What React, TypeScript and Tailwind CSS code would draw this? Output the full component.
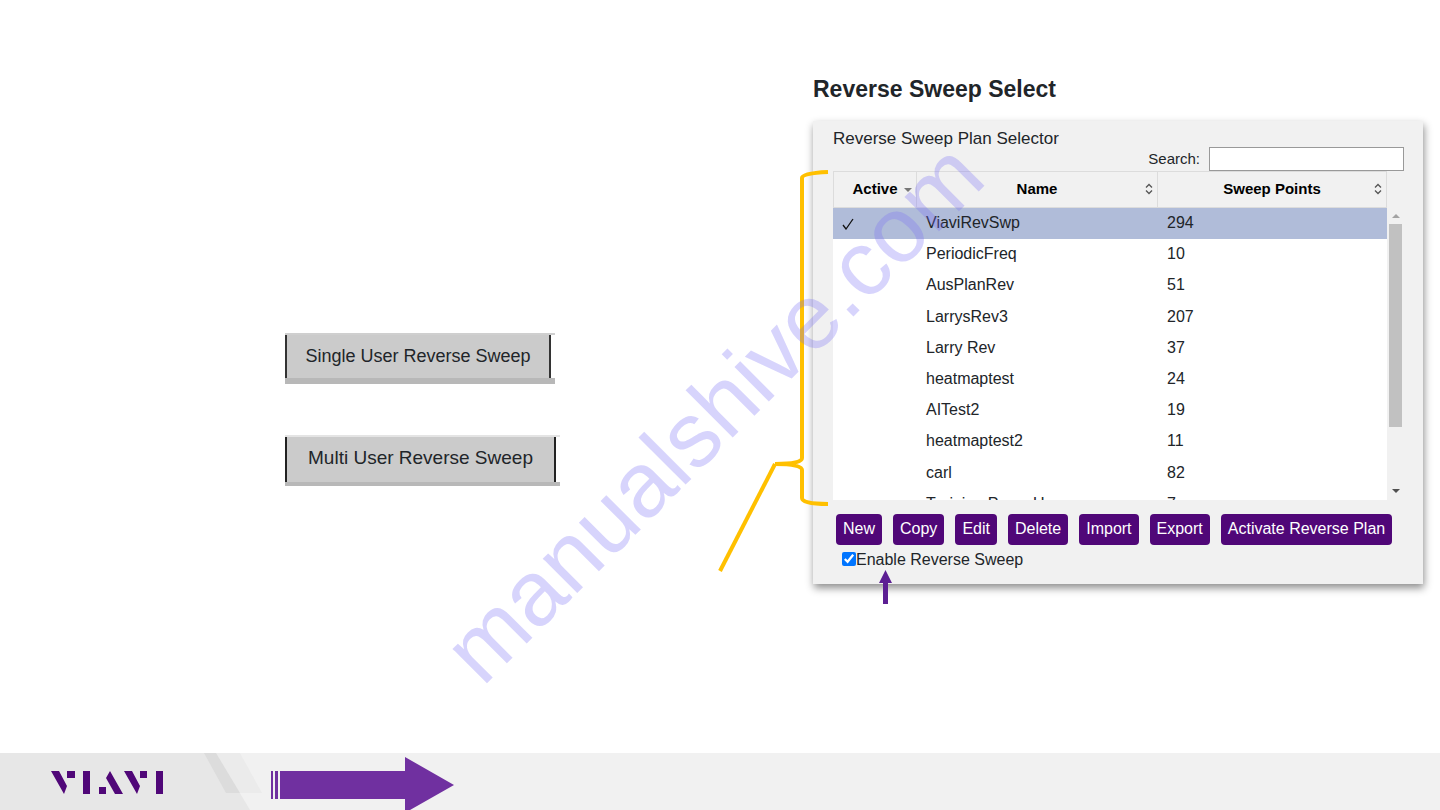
import React, { useState } from 'react';

interface SweepPlan {
  name: string;
  points: number;
}

const PLANS: SweepPlan[] = [
  { name: 'ViaviRevSwp', points: 294 },
  { name: 'PeriodicFreq', points: 10 },
  { name: 'AusPlanRev', points: 51 },
  { name: 'LarrysRev3', points: 207 },
  { name: 'Larry Rev', points: 37 },
  { name: 'heatmaptest', points: 24 },
  { name: 'AITest2', points: 19 },
  { name: 'heatmaptest2', points: 11 },
  { name: 'carl', points: 82 },
  { name: 'Training PowerUp', points: 7 },
];

const ACTIONS = ['New', 'Copy', 'Edit', 'Delete', 'Import', 'Export', 'Activate Reverse Plan'];

const SortIcon = () => (
  <svg className="absolute right-1 top-[11px] h-3 w-2" viewBox="0 0 8 12" fill="none" stroke="#555" strokeWidth="1.3">
    <path d="M1 4.5 4 1.5 7 4.5M1 7.5 4 10.5 7 7.5" />
  </svg>
);

const Logo = () => (
  <svg className="relative h-[23px] w-[112px]" viewBox="0 0 112 23" fill="#500778" role="img" aria-label="VIAVI">
    <path d="M0 0h8l8 15-3 8zM16 0h8v7h-8zM32 0h7v23h-7zM48 16h7v7h-7zM59 0 72 23h-8L55 7zM73 0h8l8 15-3 8zM89 0h7v7h-7zM105 0h7v23h-7z" />
  </svg>
);

const PlanTable = ({ active, onSelect }: { active: string; onSelect: (name: string) => void }) => (
  <div className="flex h-[329px]">
    <div className="flex-1 overflow-hidden bg-white">
      <table className="h-[349px] w-full table-fixed border-separate border-spacing-0">
        <thead>
          <tr className="h-[37px] bg-[#f1f1f1] text-[15px] font-bold text-black">
            <th className="relative w-[84px] border border-[#dcdcdc] p-0">
              Active
              <svg className="absolute right-1 top-4 h-1 w-2" viewBox="0 0 8 4" fill="#777">
                <path d="M0 0h8L4 4z" />
              </svg>
            </th>
            <th className="relative w-[241px] border-y border-r border-[#dcdcdc] p-0">
              Name
              <SortIcon />
            </th>
            <th className="relative border-y border-r border-[#dcdcdc] p-0">
              Sweep Points
              <SortIcon />
            </th>
          </tr>
        </thead>
        <tbody>
          {PLANS.map((plan) => (
            <tr
              key={plan.name}
              onClick={() => onSelect(plan.name)}
              className={plan.name === active ? 'bg-[#b0bcd9]' : 'bg-white'}
            >
              <td className="px-[9px] py-0">
                {plan.name === active && (
                  <svg className="h-3 w-3" viewBox="0 0 12 12" fill="none" stroke="#111" strokeWidth="1.3">
                    <path d="M1 7 4 11 11 1" />
                  </svg>
                )}
              </td>
              <td className="px-[9px] pb-px pt-0">{plan.name}</td>
              <td className="px-[9px] pb-px pt-0">{plan.points}</td>
            </tr>
          ))}
        </tbody>
      </table>
    </div>
    {/* Scrollbar */}
    <div className="flex w-[17px] flex-col items-center justify-between pb-[7px] pt-[43px]">
      <svg className="mb-1 h-1 w-2 shrink-0" viewBox="0 0 8 4" fill="#a3a3a3">
        <path d="M0 4h8L4 0z" />
      </svg>
      <div className="mb-auto mt-[2px] h-[203px] w-[13px] bg-[#c1c1c1]" />
      <svg className="h-1 w-2 shrink-0" viewBox="0 0 8 4" fill="#505050">
        <path d="M0 0h8L4 4z" />
      </svg>
    </div>
  </div>
);

const App: React.FC = () => {
  const [active, setActive] = useState('ViaviRevSwp');
  const [enabled, setEnabled] = useState(true);
  const [search, setSearch] = useState('');

  return (
    <div className="relative flex min-h-screen flex-col overflow-hidden bg-white font-['Liberation_Sans',Arial,sans-serif] text-base text-[#212529]">
      <main className="flex flex-1 items-start justify-between pr-[17px]">
        {/* Sweep mode buttons */}
        <div className="flex flex-col items-start gap-[51px] pl-[285px] pt-[333px]">
          <div className="border-b-[6px] border-t-2 border-b-[#b8b8b8] border-t-[#cfcfcf] pr-1">
            <button className="h-[43px] w-[266px] border-x-2 border-[#333] bg-[#cbcbcb] pb-[2px] text-lg">
              Single User Reverse Sweep
            </button>
          </div>
          <div className="border-b-4 border-t-2 border-b-[#b8b8b8] border-t-[#e4e4e4] pr-1">
            <button className="h-[45px] w-[271px] border-x-2 border-[#222] bg-[#cbcbcb] pb-[2px] text-[19px]">
              Multi User Reverse Sweep
            </button>
          </div>
        </div>

        <section className="w-[610px] pt-[73px]">
          <h1 className="text-[23px] font-bold leading-8">Reverse Sweep Select</h1>
          <div className="relative mt-4 bg-[#f1f1f1] pb-3 pl-5 pr-[19px] pt-[6px] shadow-[1px_4px_8px_rgba(0,0,0,0.45)]">
            <h2 className="text-[17px] leading-6">Reverse Sweep Plan Selector</h2>
            <div className="-mt-1 flex items-center justify-end gap-[9px]">
              <label htmlFor="search" className="text-[15px]">
                Search:
              </label>
              <input
                id="search"
                value={search}
                onChange={(e) => setSearch(e.target.value)}
                className="h-6 w-[195px] border border-[#999] bg-white px-1 outline-none"
              />
            </div>
            <PlanTable active={active} onSelect={setActive} />
            <div className="mt-[14px] flex gap-[11px] pl-[3px]">
              {ACTIONS.map((label) => (
                <button
                  key={label}
                  className="h-[31px] whitespace-nowrap rounded bg-[#500778] px-[7px] pb-[2px] leading-6 text-white"
                >
                  {label}
                </button>
              ))}
            </div>
            <label className="mt-[3px] flex items-center pl-[9px] leading-6">
              <input
                type="checkbox"
                checked={enabled}
                onChange={(e) => setEnabled(e.target.checked)}
                className="mb-[2px] h-[14px] w-[14px]"
              />
              Enable Reverse Sweep
            </label>

            {/* Callout brace around the table */}
            <svg
              className="pointer-events-none absolute -left-[97px] top-[47px] h-[406px] w-[115px]"
              viewBox="0 0 115 406"
              fill="none"
              stroke="#ffc000"
              strokeWidth="4"
            >
              <path d="M112 4Q86 5 86 10V290Q86 296 59 296Q86 296 86 302V330Q86 336 112 336" />
              <path d="M59 296 4 403" />
            </svg>
            {/* Pointer to the enable option */}
            <svg
              className="pointer-events-none absolute left-[66px] top-[449px] h-[34px] w-[13px]"
              viewBox="0 0 13 34"
              fill="#5c1f93"
            >
              <path d="M6.5 0 13 13H9V34H4V13H0z" />
            </svg>
          </div>
        </section>
      </main>

      <footer className="relative flex h-[57px] items-center bg-[#f1f1f1] pl-[51px] pt-px">
        <svg className="absolute left-0 top-0 h-[57px] w-[262px]" viewBox="0 0 262 57">
          <path d="M0 0H216L250 57H0z" fill="#e7e7e7" />
          <path d="M216 0H240L262 40H238z" fill="#ebebeb" />
          <path d="M204 0H216L240 40H226z" fill="#dcdcdc" />
        </svg>
        <Logo />
        <svg className="absolute bottom-0 left-[271px] h-[53px] w-[183px]" viewBox="0 0 183 53" fill="#7030a0">
          <path d="M0 14h2v28H0zM4 14h3v28H4zM9 14H134V0L183 28 139 53H134V42H9z" />
        </svg>
      </footer>

      {/* Watermark */}
      <div className="pointer-events-none absolute inset-0 flex items-center justify-center">
        <span className="-rotate-45 whitespace-nowrap pr-5 text-[92px] leading-none text-[#7b6ff5]/30">
          manualshive.com
        </span>
      </div>
    </div>
  );
};

export default App;
